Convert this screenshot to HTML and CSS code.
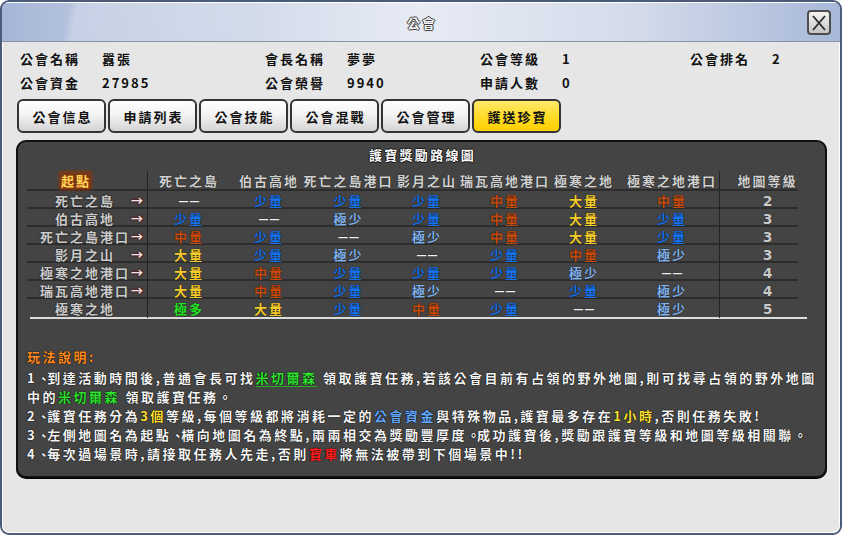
FILE: index.html
```html
<!DOCTYPE html>
<html lang="zh-Hant">
<head>
<meta charset="utf-8">
<title>公會</title>
<link rel="stylesheet" href="styles.css">
</head>
<body>
<div class="window">
  <div class="titlebar">
    <div></div>
    <div class="title">公會</div>
    <div class="close-wrap">
      <div class="close">
        <svg width="20" height="20" viewBox="0 0 20 20"><path d="M4 3 L16 17 M16 3 L4 17" stroke="#2a2a2a" stroke-width="1.8" fill="none"/></svg>
      </div>
    </div>
  </div>
  <div class="content">
    <div class="info">
      <div class="field"><span class="label">公會名稱</span><span class="value">囂張</span></div>
      <div class="field"><span class="label">會長名稱</span><span class="value">夢夢</span></div>
      <div class="field"><span class="label">公會等級</span><span class="value">1</span></div>
      <div class="field"><span class="label">公會排名</span><span class="value">2</span></div>
      <div class="field"><span class="label">公會資金</span><span class="value">27985</span></div>
      <div class="field"><span class="label">公會榮譽</span><span class="value">9940</span></div>
      <div class="field"><span class="label">申請人數</span><span class="value">0</span></div>
      <div class="field"></div>
    </div>
    <div class="tabs">
      <div class="tab">公會信息</div>
      <div class="tab">申請列表</div>
      <div class="tab">公會技能</div>
      <div class="tab">公會混戰</div>
      <div class="tab">公會管理</div>
      <div class="tab active">護送珍寶</div>
    </div>
    <div class="panel">
      <div class="panel-title">護寶獎勵路線圖</div>
      <div class="table">
        <div class="tr head">
          <div class="rl"><span class="start">起點</span></div>
          <div class="c1"><span>死亡之島</span></div>
          <div><span>伯古高地</span></div>
          <div><span>死亡之島港口</span></div>
          <div><span>影月之山</span></div>
          <div><span>瑞瓦高地港口</span></div>
          <div><span>極寒之地</span></div>
          <div><span>極寒之地港口</span></div>
          <div class="lv"><span>地圖等級</span></div>
        </div>
        <div class="tr">
          <div class="rl"><span class="name">死亡之島</span><span class="arrow">→</span></div>
          <div class="c1"><span class="d">－－</span></div>
          <div><span class="s">少量</span></div>
          <div><span class="s">少量</span></div>
          <div><span class="s">少量</span></div>
          <div><span class="m">中量</span></div>
          <div><span class="l">大量</span></div>
          <div><span class="m">中量</span></div>
          <div class="lv"><span class="num">2</span></div>
        </div>
        <div class="tr">
          <div class="rl"><span class="name">伯古高地</span><span class="arrow">→</span></div>
          <div class="c1"><span class="s">少量</span></div>
          <div><span class="d">－－</span></div>
          <div><span class="f">極少</span></div>
          <div><span class="s">少量</span></div>
          <div><span class="m">中量</span></div>
          <div><span class="l">大量</span></div>
          <div><span class="s">少量</span></div>
          <div class="lv"><span class="num">3</span></div>
        </div>
        <div class="tr">
          <div class="rl"><span class="name">死亡之島港口</span><span class="arrow">→</span></div>
          <div class="c1"><span class="m">中量</span></div>
          <div><span class="s">少量</span></div>
          <div><span class="d">－－</span></div>
          <div><span class="f">極少</span></div>
          <div><span class="m">中量</span></div>
          <div><span class="l">大量</span></div>
          <div><span class="s">少量</span></div>
          <div class="lv"><span class="num">3</span></div>
        </div>
        <div class="tr">
          <div class="rl"><span class="name">影月之山</span><span class="arrow">→</span></div>
          <div class="c1"><span class="l">大量</span></div>
          <div><span class="s">少量</span></div>
          <div><span class="f">極少</span></div>
          <div><span class="d">－－</span></div>
          <div><span class="s">少量</span></div>
          <div><span class="m">中量</span></div>
          <div><span class="f">極少</span></div>
          <div class="lv"><span class="num">3</span></div>
        </div>
        <div class="tr">
          <div class="rl"><span class="name">極寒之地港口</span><span class="arrow">→</span></div>
          <div class="c1"><span class="l">大量</span></div>
          <div><span class="m">中量</span></div>
          <div><span class="s">少量</span></div>
          <div><span class="s">少量</span></div>
          <div><span class="s">少量</span></div>
          <div><span class="f">極少</span></div>
          <div><span class="d">－－</span></div>
          <div class="lv"><span class="num">4</span></div>
        </div>
        <div class="tr">
          <div class="rl"><span class="name">瑞瓦高地港口</span><span class="arrow">→</span></div>
          <div class="c1"><span class="l">大量</span></div>
          <div><span class="m">中量</span></div>
          <div><span class="s">少量</span></div>
          <div><span class="f">極少</span></div>
          <div><span class="d">－－</span></div>
          <div><span class="s">少量</span></div>
          <div><span class="f">極少</span></div>
          <div class="lv"><span class="num">4</span></div>
        </div>
        <div class="tr">
          <div class="rl"><span class="name">極寒之地</span></div>
          <div class="c1"><span class="g">極多</span></div>
          <div><span class="l">大量</span></div>
          <div><span class="s">少量</span></div>
          <div><span class="m">中量</span></div>
          <div><span class="s">少量</span></div>
          <div><span class="d">－－</span></div>
          <div><span class="f">極少</span></div>
          <div class="lv"><span class="num">5</span></div>
        </div>
      </div>
      <div class="divider"></div>
      <div class="rules">
        <div class="rules-head">玩法說明:</div>
        <div class="line">1<span class="p">、</span>到達活動時間後,普通會長可找<span class="npc under">米切爾森</span> 領取護寶任務,若該公會目前有占領的野外地圖,則可找尋占領的野外地圖</div>
        <div class="line">中的<span class="npc">米切爾森</span> 領取護寶任務<span class="p">。</span></div>
        <div class="line">2<span class="p">、</span>護寶任務分為<span class="yel">3個</span>等級,每個等級都將消耗一定的<span class="blu">公會資金</span>與特殊物品,護寶最多存在<span class="yel">1小時</span>,否則任務失敗!</div>
        <div class="line">3<span class="p">、</span>左側地圖名為起點<span class="p">、</span>橫向地圖名為終點,兩兩相交為獎勵豐厚度<span class="p">。</span>成功護寶後,獎勵跟護寶等級和地圖等級相關聯<span class="p">。</span></div>
        <div class="line">4<span class="p">、</span>每次過場景時,請接取任務人先走,否則<span class="red">寶車</span>將無法被帶到下個場景中!!</div>
      </div>
    </div>
  </div>
</div>
</body>
</html>
```

FILE: styles.css
```css
* { box-sizing: border-box; }
html, body { margin: 0; padding: 0; }
body {
  width: 842px;
  height: 535px;
  background: #ffffff;
  font-family: "Noto Sans CJK TC", "Noto Sans CJK SC", sans-serif;
  font-weight: 700;
  font-size: 13px;
  overflow: hidden;
}
.window {
  width: 842px;
  height: 535px;
  border: 2px solid #4b5c7b;
  border-radius: 9px;
  background: #e6e6e6;
  overflow: hidden;
  display: flex;
  flex-direction: column;
}
.titlebar {
  height: 40px;
  flex: none;
  display: grid;
  grid-template-columns: 1fr auto 1fr;
  align-items: center;
  background:
    linear-gradient(100deg, rgba(255,255,255,0) 8%, rgba(255,255,255,0.25) 9%, rgba(255,255,255,0) 30%),
    linear-gradient(90deg, #a5b6d7 0%, #cbd5e7 22%, #e7ebf4 50%, #d3dbea 76%, #a7b8d9 100%);
  border-bottom: 1px solid #8a93a6;
  border-top: 1px solid #fff;
}
.title {
  color: #f6f6f6;
  letter-spacing: 2px;
  margin-right: -2px;
  font-size: 13px;
  text-shadow: -1px 0 #3c3c3c, 1px 0 #3c3c3c, 0 -1px #3c3c3c, 0 1px #3c3c3c;
}
.close-wrap {
  display: flex;
  justify-content: flex-end;
  padding-right: 9px;
  padding-top: 1px;
}
.close {
  width: 24px;
  height: 25px;
  border: 2px solid #4d4d4d;
  border-radius: 4px;
  background: linear-gradient(#f4f4f4, #d8d8d8 60%, #c4c4c4);
  display: flex;
  align-items: center;
  justify-content: center;
}
.content {
  flex: 1;
  border: 1px solid #ffffff;
  border-top: 0;
  border-radius: 0 0 7px 7px;
  padding: 4px 0 0 13px;
}
.info {
  margin-left: 4px;
  display: grid;
  grid-template-columns: 245px 215px 210px 1fr;
  grid-auto-rows: 24px;
  color: #111;
  letter-spacing: 2px;
}
.field { display: flex; align-items: center; }
.label { width: 82px; flex: none; }
.tabs {
  display: flex;
  gap: 2px;
  margin: 5px 0 0 1px;
}
.tab {
  width: 89px;
  height: 34px;
  border: 2px solid #343434;
  border-radius: 6px;
  background: linear-gradient(#ffffff, #f3f3f3 45%, #d4d4d4);
  display: flex;
  align-items: center;
  justify-content: center;
  letter-spacing: 2px;
  padding-left: 2px;
  color: #111;
}
.tab.active {
  background: linear-gradient(#ffe96a, #ffdb2a 50%, #ffd000);
}
.panel {
  margin-top: 7px;
  width: 811px;
  height: 338px;
  background: #444444;
  border: 2px solid #111;
  border-radius: 10px;
  box-shadow: 0 1px 0 #000;
  padding-top: 3px;
}
.panel-title {
  text-align: center;
  color: #fafafa;
  letter-spacing: 2.3px;
  line-height: 20px;
  padding-left: 2px;
  text-shadow: -1px 0 #111, 1px 0 #111, 0 -1px #111, 0 1px #111;
}
.table {
  margin: 6px 0 0 9px;
  width: 771px;
  color: #d2d2d2;
}
.tr {
  display: grid;
  grid-template-columns: 120px 81px 80px 79px 78px 78px 80px 96px 79px;
  height: 18px;
  border-top: 2px solid #2d2d2d;
}
.tr.head { border-top: 0; }
.tr > div {
  display: flex;
  align-items: center;
  justify-content: center;
  white-space: nowrap;
  letter-spacing: 2px;
  padding-left: 2px;
  text-shadow: 0 0 1px #000;
}
.tr > .c1 { border-left: 1px solid #232323; }
.tr > .lv { border-left: 1px solid #232323; padding-left: 17px; }
.tr > .rl { justify-content: flex-start; padding-left: 13px; }
.tr.head > .rl { padding-left: 32px; }
.name { width: 90px; text-align: center; color: #cbcbcb; text-shadow: 0 0 2px #111; }
.arrow {
  margin-left: 1px;
  font-size: 12px;
  letter-spacing: 0;
  color: #f2e6e6;
  text-shadow: 0 0 2px #5a0a0a, 0 0 3px #5a0a0a;
}
.start {
  color: #ffd45a;
  padding: 0 1px 0 2px;
  border-radius: 3px;
  background: rgba(150, 55, 0, 0.55);
  box-shadow: 0 0 3px rgba(150, 55, 0, 0.8);
  text-shadow: 0 0 1px #a13a00, 0 0 2px #a13a00, 0 0 3px #8a3000;
}
.s { color: #1672ee; }
.m { color: #c54a0c; }
.l { color: #f6cc2a; }
.f { color: #80b2ee; }
.g { color: #24e424; }
.d { color: #f2f2f2; letter-spacing: -2px; margin-right: 2px; }
.num { color: #cacaca; font-size: 14px; letter-spacing: 0; font-family: "DejaVu Sans", sans-serif; }
.divider {
  margin: 2px 0 0 12px;
  width: 777px;
  height: 2px;
  background: #dcdcdc;
}
.rules {
  margin: 28px 0 0 9px;
  line-height: 19px;
  letter-spacing: 2.5px;
  color: #f4f4f4;
  text-shadow: 0 0 1px #000, 0 0 1px #000;
}
.rules-head { color: #ff8b1e; margin-bottom: 2px; }
.line { white-space: nowrap; }
.p { font-family: "Noto Sans CJK SC", sans-serif; letter-spacing: -4px; margin-right: 1px; }
.npc { color: #2fe02f; }
.npc.under { text-decoration: underline; text-decoration-color: #22b022; text-underline-offset: 3px; }
.yel { color: #ffe030; }
.blu { color: #63a8ff; }
.red { color: #ff1e1e; }
```
